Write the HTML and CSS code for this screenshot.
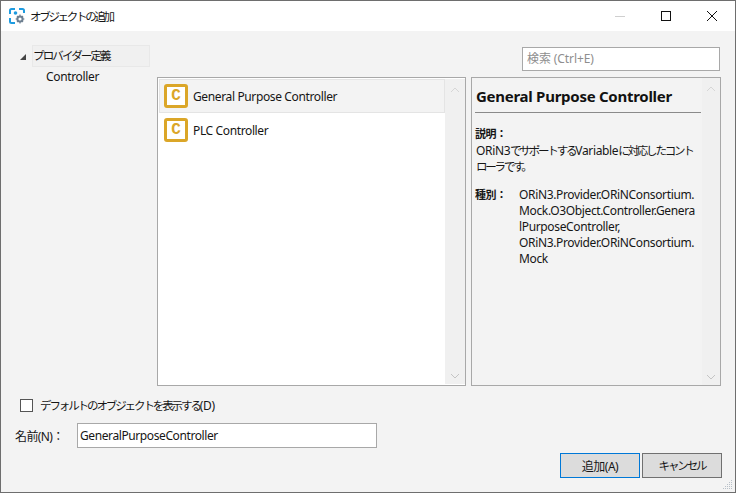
FILE: index.html
```html
<!DOCTYPE html>
<html lang="ja">
<head>
<meta charset="utf-8">
<title>オブジェクトの追加</title>
<link rel="stylesheet" href="styles.css">
</head>
<body>
<div class="window">
  <header class="titlebar">
    <svg class="app-icon" viewBox="0 0 16 16" width="16" height="16">
      <path d="M1 6V2.5Q1 1 2.5 1H6" fill="none" stroke="#1e9be0" stroke-width="2"/>
      <path d="M10 1h3.5Q15 1 15 2.5V5" fill="none" stroke="#1e9be0" stroke-width="2"/>
      <path d="M1 10v3.5Q1 15 2.5 15H6" fill="none" stroke="#1e9be0" stroke-width="2"/>
      <circle cx="6.5" cy="5" r="1.8" fill="#1e9be0"/>
      <circle cx="11" cy="11" r="2.6" fill="none" stroke="#6d7f90" stroke-width="2"/>
      <path d="M11 6.6v2M11 13.4v2M6.6 11h2M13.4 11h2M8 8l1.3 1.3M12.7 12.7L14 14M14 8l-1.3 1.3M9.3 12.7L8 14" stroke="#6d7f90" stroke-width="1.2"/>
    </svg>
    <span class="title">オブジェクトの追加</span>
    <div class="controls">
      <span class="ctl"><svg width="12" height="12" viewBox="0 0 12 12"><path d="M1 6.5h10" stroke="#cfcfcf"/></svg></span>
      <span class="ctl"><svg width="12" height="12" viewBox="0 0 12 12"><rect x="1.5" y="1.5" width="9" height="9" fill="none" stroke="#111"/></svg></span>
      <span class="ctl"><svg width="12" height="12" viewBox="0 0 12 12"><path d="M1 1l10 10M11 1L1 11" stroke="#111" fill="none"/></svg></span>
    </div>
  </header>
  <main class="content">
    <div class="columns">
      <aside class="tree">
        <div class="tree-root">
          <span class="tree-arrow"></span>
          <span class="tree-selected">プロバイダー定義</span>
        </div>
        <div class="tree-child">Controller</div>
      </aside>
      <section class="main">
        <div class="search-row"><div class="search">検索 (Ctrl+E)</div></div>
        <div class="panes">
          <div class="list-pane">
            <div class="list">
              <div class="item selected">
                <span class="c-icon">C</span><span>General Purpose Controller</span>
              </div>
              <div class="item">
                <span class="c-icon">C</span><span>PLC Controller</span>
              </div>
            </div>
            <div class="scrollbar">
              <svg width="10" height="6" viewBox="0 0 10 6"><path d="M1 5l4-4 4 4" fill="none" stroke="#d6d6d6"/></svg>
              <svg width="10" height="6" viewBox="0 0 10 6"><path d="M1 1l4 4 4-4" fill="none" stroke="#c4c4c4"/></svg>
            </div>
          </div>
          <div class="detail-pane">
            <div class="detail">
              <h1 class="detail-title">General Purpose Controller</h1>
              <div class="detail-label">説明：</div>
              <p class="detail-desc">ORiN3<span class="ja">でサポートする</span>Variable<span class="ja">に対応したコント</span><br><span class="ja">ローラです。</span></p>
              <div class="detail-kind">
                <span class="kind-label">種別：</span>
                <span class="kind-value">ORiN3.Provider.ORiNConsortium.<br>Mock.O3Object.Controller.Genera<br>lPurposeController,<br>ORiN3.Provider.ORiNConsortium.<br>Mock</span>
              </div>
            </div>
            <div class="scrollbar detail-scroll">
              <svg width="10" height="6" viewBox="0 0 10 6"><path d="M1 5l4-4 4 4" fill="none" stroke="#d6d6d6"/></svg>
              <svg width="10" height="6" viewBox="0 0 10 6"><path d="M1 1l4 4 4-4" fill="none" stroke="#c4c4c4"/></svg>
            </div>
          </div>
        </div>
      </section>
    </div>
    <label class="check-row"><span class="checkbox"></span><span class="ja">デフォルトのオブジェクトを表示する</span><span class="mnemonic">(D)</span></label>
    <div class="name-row">
      <span class="name-label">名前(N)：</span>
      <div class="name-input">GeneralPurposeController</div>
    </div>
    <div class="buttons">
      <button class="btn primary">追加(A)</button>
      <button class="btn"><span class="ja">キャンセル</span></button>
    </div>
    <svg class="grip" width="12" height="12" viewBox="0 0 12 12" fill="#b8c0c8">
      <rect x="9" y="1" width="1" height="1"/><rect x="7" y="3" width="1" height="1"/><rect x="9" y="3" width="1" height="1"/>
      <rect x="5" y="5" width="1" height="1"/><rect x="7" y="5" width="1" height="1"/><rect x="9" y="5" width="1" height="1"/>
      <rect x="3" y="7" width="1" height="1"/><rect x="5" y="7" width="1" height="1"/><rect x="7" y="7" width="1" height="1"/><rect x="9" y="7" width="1" height="1"/>
      <rect x="1" y="9" width="1" height="1"/><rect x="3" y="9" width="1" height="1"/><rect x="5" y="9" width="1" height="1"/><rect x="7" y="9" width="1" height="1"/><rect x="9" y="9" width="1" height="1"/>
    </svg>
  </main>
</div>
</body>
</html>
```
FILE: styles.css
```css
* { box-sizing: border-box; }
html, body { margin: 0; height: 100%; }
body {
  font-family: "Noto Sans", "Noto Sans CJK JP", sans-serif;
  font-size: 12px;
  color: #161616;
  background: #f3f3f3;
  overflow: hidden;
}
.ja { font-size: 11.5px; letter-spacing: -1.8px; }
.window {
  width: 736px;
  height: 493px;
  border: 1px solid #6e6e6e;
  display: flex;
  flex-direction: column;
}
.titlebar {
  height: 30px;
  background: #fff;
  display: flex;
  align-items: center;
  padding-left: 8px;
  flex: none;
}
.app-icon { margin-right: 5px; }
.title { font-size: 11.5px; letter-spacing: -2.3px; color: #161616; }
.controls { margin-left: auto; display: flex; }
.ctl {
  width: 46px;
  height: 30px;
  display: flex;
  align-items: center;
  justify-content: center;
}
.content {
  flex: 1;
  position: relative;
  display: flex;
  flex-direction: column;
  padding: 14px 14px 0 14px;
}
.columns { display: flex; height: 341px; flex: none; }
.tree { width: 142px; flex: none; }
.tree-root { display: flex; align-items: center; height: 22px; }
.tree-arrow {
  width: 0;
  height: 0;
  margin: 2px 6px 0 5px;
  border-left: 6px solid transparent;
  border-bottom: 6px solid #444;
}
.tree-selected {
  width: 118px;
  height: 22px;
  line-height: 20px;
  border: 1px solid #e8e8e8;
  background: #f0f0f0;
  font-size: 11.5px;
  letter-spacing: -1.85px;
}
.tree-child { margin: 0 0 0 31px; height: 20px; line-height: 20px; letter-spacing: -0.35px; }
.main { flex: 1; display: flex; flex-direction: column; min-width: 0; }
.search-row { display: flex; justify-content: flex-end; height: 32px; padding: 2px 1px 0 0; flex: none; }
.search {
  width: 198px;
  height: 24px;
  line-height: 22px;
  border: 1px solid #a8a8a8;
  background: #fff;
  color: #8e8e8e;
  padding-left: 4px;
  letter-spacing: -0.1px;
}
.panes { display: flex; gap: 5px; flex: 1; min-height: 0; }
.list-pane {
  width: 309px;
  border: 1px solid #a8a8a8;
  background: #fff;
  display: flex;
  padding: 1px 0 1px 1px;
}
.list { flex: 1; }
.item {
  height: 34px;
  display: flex;
  align-items: center;
  padding-left: 5px;
  gap: 5px;
  letter-spacing: -0.37px;
  border-top: 1px solid transparent;
  border-bottom: 1px solid transparent;
}
.item.selected { background: #f3f3f3; border: 1px solid #e4e4e4; padding-left: 4px; }
.c-icon {
  width: 24px;
  height: 24px;
  flex: none;
  border: 3px solid #dba628;
  border-radius: 3px;
  background: #fff;
  color: #dba628;
  font: bold 16px/19px "Liberation Mono", monospace;
  letter-spacing: 0;
  text-align: center;
}
.scrollbar {
  width: 20px;
  flex: none;
  background: #f0f0f0;
  display: flex;
  flex-direction: column;
  justify-content: space-between;
  align-items: center;
  padding: 8px 0 5px;
}
.detail-pane {
  width: 250px;
  border: 1px solid #a8a8a8;
  background: #f3f3f3;
  display: flex;
}
.detail { flex: 1; padding: 0 1px 0 3px; min-width: 0; }
.detail-scroll { width: 18px; }
.detail-title {
  margin: 0 0 13px;
  font-size: 15px;
  font-weight: 700;
  height: 35px;
  line-height: 36px;
  border-bottom: 1px solid #8a8a8a;
  padding-left: 1px;
  color: #111;
  letter-spacing: -0.27px;
}
.detail-label { font-weight: 700; font-size: 11px; line-height: 16px; letter-spacing: -0.5px; }
.detail-desc { margin: 1px 0 12px; line-height: 16px; padding-left: 1px; letter-spacing: -0.35px; white-space: nowrap; }
.detail-desc .ja { letter-spacing: -2.2px; }
.detail-kind { display: flex; line-height: 16px; }
.kind-label { width: 44px; flex: none; font-weight: 700; font-size: 11px; letter-spacing: -0.5px; }
.kind-value { letter-spacing: -0.35px; white-space: nowrap; }
.check-row { display: flex; align-items: center; gap: 7px; margin: 11px 0 0 5px; height: 16px; }
.check-row .ja { letter-spacing: -2.1px; }
.mnemonic { margin-left: -7px; letter-spacing: -0.3px; }
.checkbox { width: 13px; height: 13px; border: 1px solid #555; background: #fff; flex: none; }
.name-row { display: flex; align-items: center; margin-top: 10px; height: 25px; }
.name-label { width: 62px; flex: none; letter-spacing: -0.6px; }
.name-input {
  width: 300px;
  height: 25px;
  line-height: 23px;
  border: 1px solid #a8a8a8;
  background: #fff;
  padding-left: 2px;
  letter-spacing: -0.4px;
}
.buttons { display: flex; justify-content: flex-end; gap: 2px; margin-top: 5px; margin-right: -1px; }
.btn {
  width: 80px;
  height: 25px;
  padding: 0;
  border: 1px solid #707070;
  background: #dcdcdc;
  font: inherit;
  color: #161616;
  letter-spacing: -0.5px;
}
.btn .ja { letter-spacing: -2.1px; }
.btn.primary { border-color: #0078d7; }
.grip { position: absolute; right: 1px; bottom: 1px; }
```
